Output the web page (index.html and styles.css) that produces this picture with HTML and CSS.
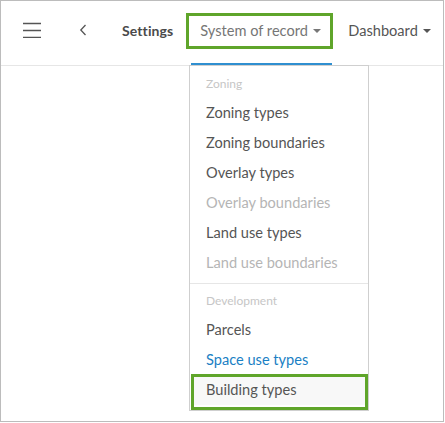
FILE: index.html
```html
<!DOCTYPE html>
<html lang="en">
<head>
<meta charset="utf-8">
<title>Settings</title>
<link rel="stylesheet" href="styles.css">
</head>
<body>
<div class="frame">
  <header class="topbar">
    <span class="menu-btn" aria-label="Menu">
      <svg width="18" height="16" viewBox="0 0 18 16"><path d="M0 1.5h18M0 8.5h18M0 15.5h18" stroke="#555" stroke-width="1.4" fill="none"/></svg>
    </span>
    <span class="back-btn" aria-label="Back">
      <svg width="8" height="12" viewBox="0 0 8 12"><path d="M6.5 1 L1.8 6 L6.5 11" stroke="#555" stroke-width="1.3" fill="none"/></svg>
    </span>
    <span class="title">Settings</span>
    <span class="tab tab-active">
      System of record
      <span class="caret"></span>
      <span class="callout callout-tab"></span>
    </span>
    <span class="tab tab-plain">
      Dashboard
      <span class="caret"></span>
    </span>
  </header>
  <div class="body-area">
    <div class="dropdown">
      <div class="group group-first">
        <div class="group-label">Zoning</div>
        <div class="item">Zoning types</div>
        <div class="item">Zoning boundaries</div>
        <div class="item">Overlay types</div>
        <div class="item item-disabled">Overlay boundaries</div>
        <div class="item">Land use types</div>
        <div class="item item-disabled">Land use boundaries</div>
      </div>
      <div class="group group-second">
        <div class="group-label">Development</div>
        <div class="item">Parcels</div>
        <div class="item item-link">Space use types</div>
        <div class="item item-hover">Building types<span class="callout callout-item"></span></div>
      </div>
    </div>
  </div>
</div>
</body>
</html>
```

FILE: styles.css
```css
* { box-sizing: border-box; }
html, body { margin: 0; padding: 0; background: #fff; }
body { font-family: Lato, "Open Sans", sans-serif; font-size: 14.6px; color: #555; }

.frame {
  width: 444px;
  height: 422px;
  border: 1px solid #bcbcbc;
  position: relative;
  overflow: hidden;
}

.topbar {
  height: 65px;
  border-bottom: 1px solid #e6e6e6;
  display: flex;
  align-items: stretch;
  padding-left: 22px;
}
.menu-btn, .back-btn, .title, .tab {
  display: flex;
  align-items: center;
  padding-bottom: 6px;
}
.menu-btn { width: 18px; }
.back-btn { margin-left: 38px; }
.title { margin-left: 35px; font-size: 14px; font-weight: bold; color: #4a4a4a; letter-spacing: 0.1px; }

.tab {
  position: relative;
  white-space: nowrap;
}
.tab-active {
  margin-left: 18px;
  width: 141px;
  padding-left: 9px;
  color: #767676;
  border-bottom: 3px solid #2f8fd0;
  padding-bottom: 3px;
  margin-bottom: -1px;
}
.tab-plain {
  padding-left: 16px;
  color: #555;
}
.caret {
  display: inline-block;
  width: 0;
  height: 0;
  border-left: 4px solid transparent;
  border-right: 4px solid transparent;
  border-top: 4px solid #555;
  margin-left: 5px;
  margin-top: 1px;
}
.tab-active .caret { border-top-color: #777; }

.callout {
  position: absolute;
  border: 3px solid #5fa52a;
  pointer-events: none;
}
.callout-tab { left: -5px; top: 12px; width: 147px; height: 36px; }

.body-area { position: relative; }

.dropdown {
  position: absolute;
  left: 188px;
  top: -1px;
  width: 180px;
  border: 1px solid #cfcfcf;
  background: #fff;
  padding-bottom: 5px;
}
.group-first { padding: 4px 0 5px; }
.group-second { padding: 3px 0 0; border-top: 1px solid #e6e6e6; }
.group-label {
  height: 28px;
  line-height: 28px;
  padding-left: 16px;
  font-size: 12px;
  color: #c6c6c6;
}
.item {
  height: 30px;
  line-height: 30px;
  padding-left: 16px;
  color: #555;
  position: relative;
}
.item-disabled { color: #b5b5b5; }
.item-link { color: #1a80c4; }
.item-hover { background: #f8f8f8; margin: 0 2px; padding-left: 14px; }
.callout-item { left: -1px; top: -1px; width: 177px; height: 36px; }
```
